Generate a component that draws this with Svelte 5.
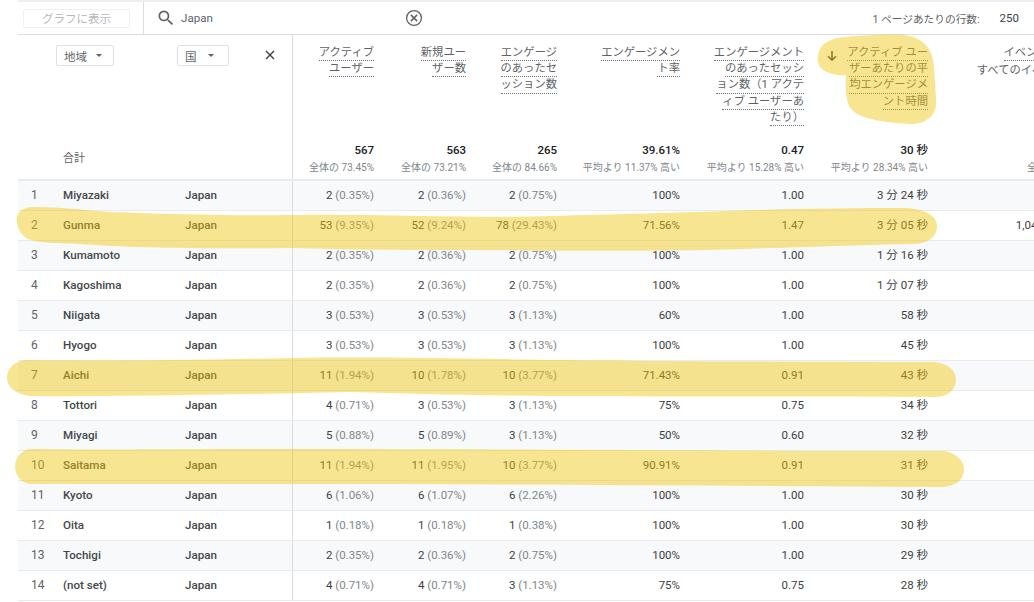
<script lang="ts">
  // [name, active, %, new, %, engaged, %, rate, per user, time]
  const rows = [
    ['Miyazaki', '2', '0.35', '2', '0.36', '2', '0.75', '100%', '1.00', '3 分 24 秒'],
    ['Gunma', '53', '9.35', '52', '9.24', '78', '29.43', '71.56%', '1.47', '3 分 05 秒'],
    ['Kumamoto', '2', '0.35', '2', '0.36', '2', '0.75', '100%', '1.00', '1 分 16 秒'],
    ['Kagoshima', '2', '0.35', '2', '0.36', '2', '0.75', '100%', '1.00', '1 分 07 秒'],
    ['Niigata', '3', '0.53', '3', '0.53', '3', '1.13', '60%', '1.00', '58 秒'],
    ['Hyogo', '3', '0.53', '3', '0.53', '3', '1.13', '100%', '1.00', '45 秒'],
    ['Aichi', '11', '1.94', '10', '1.78', '10', '3.77', '71.43%', '0.91', '43 秒'],
    ['Tottori', '4', '0.71', '3', '0.53', '3', '1.13', '75%', '0.75', '34 秒'],
    ['Miyagi', '5', '0.88', '5', '0.89', '3', '1.13', '50%', '0.60', '32 秒'],
    ['Saitama', '11', '1.94', '11', '1.95', '10', '3.77', '90.91%', '0.91', '31 秒'],
    ['Kyoto', '6', '1.06', '6', '1.07', '6', '2.26', '100%', '1.00', '30 秒'],
    ['Oita', '1', '0.18', '1', '0.18', '1', '0.38', '100%', '1.00', '30 秒'],
    ['Tochigi', '2', '0.35', '2', '0.36', '2', '0.75', '100%', '1.00', '29 秒'],
    ['(not set)', '4', '0.71', '4', '0.71', '3', '1.13', '75%', '0.75', '28 秒'],
  ]

  const metrics = [
    { lines: ['アクティブ', 'ユーザー'], total: '567', sub: '全体の 73.45%' },
    { lines: ['新規ユー', 'ザー数'], total: '563', sub: '全体の 73.21%' },
    { lines: ['エンゲージ', 'のあったセ', 'ッション数'], total: '265', sub: '全体の 84.66%' },
    { lines: ['エンゲージメン', 'ト率'], total: '39.61%', sub: '平均より 11.37% 高い' },
    {
      lines: ['エンゲージメント', 'のあったセッシ', 'ョン数（1 アクテ', 'ィブ ユーザーあ', 'たり）'],
      total: '0.47',
      sub: '平均より 15.28% 高い',
    },
    {
      lines: ['アクティブ ユー', 'ザーあたりの平', '均エンゲージメ', 'ント時間'],
      total: '30 秒',
      sub: '平均より 28.34% 高い',
      sorted: true,
    },
  ]
</script>

<div class="page">
  <div class="toolbar">
    <div class="chart-cell"><button class="chart-btn">グラフに表示</button></div>
    <div class="search">
      <svg class="search-icon" viewBox="0 0 24 24" width="20" height="20">
        <path d="M15.5 14h-.79l-.28-.27A6.47 6.47 0 0 0 16 9.5 6.5 6.5 0 1 0 9.5 16c1.61 0 3.09-.59 4.23-1.57l.27.28v.79l5 4.99L20.49 19l-4.99-5zm-6 0C7.01 14 5 11.99 5 9.5S7.01 5 9.5 5 14 7.01 14 9.5 11.99 14 9.5 14z" fill="#5f6368"/>
      </svg>
      <span class="query">Japan</span>
      <svg class="clear-icon" viewBox="0 0 18 18" width="18" height="18">
        <circle cx="9" cy="9" r="7.4" fill="none" stroke="#5f6368" stroke-width="1.3"/>
        <path d="M5.9 5.9l6.2 6.2M12.1 5.9l-6.2 6.2" stroke="#5f6368" stroke-width="1.5" fill="none"/>
      </svg>
    </div>
    <div class="pager">
      <span class="pager-label">1 ページあたりの行数:</span>
      <span class="pager-value">250</span>
    </div>
  </div>

  <div class="grid head">
    <div class="dim first">
      <span class="total-label">合計</span>
    </div>
    <div class="dim">
      <button class="picker picker-region">地域<i class="caret"></i></button>
    </div>
    <div class="dim dim-country">
      <button class="picker picker-country">国<i class="caret"></i></button>
      <svg class="close" viewBox="0 0 10 10" width="10" height="10">
        <path d="M1 1l8 8M9 1l-8 8" stroke="#3c4043" stroke-width="1.4" fill="none"/>
      </svg>
    </div>
    {#each metrics as m, i}
      <div class="metric" class:divider={i === 0}>
        <div class="label-row">
          {#if m.sorted}
            <svg class="sort" viewBox="0 0 12 12" width="12" height="12">
              <path d="M6 1v9M2 6.2L6 10.2l4-4" stroke="#3c4043" stroke-width="1.6" fill="none"/>
            </svg>
          {/if}
          <div class="label">
            {#each m.lines as line}
              <span class="label-line"><span>{line}</span></span>
            {/each}
          </div>
        </div>
        <div class="total">{m.total}</div>
        <div class="sub">{m.sub}</div>
      </div>
    {/each}
    <div class="metric events">
      <div class="label events-label">
        <span class="label-line events-title"><span>イベント数</span></span>
        <span class="label-line plain">すべてのイベント</span>
      </div>
      <div class="total">&nbsp;</div>
      <div class="sub">全体の 81.20%</div>
    </div>
  </div>

  {#each rows as r, i}
    <div class="grid row" class:odd={i % 2 === 0}>
      <div class="idx">{i + 1}</div>
      <div class="name">{r[0]}</div>
      <div class="name">Japan</div>
      <div class="num divider">{r[1]} <span class="pct">({r[2]}%)</span></div>
      <div class="num">{r[3]} <span class="pct">({r[4]}%)</span></div>
      <div class="num">{r[5]} <span class="pct">({r[6]}%)</span></div>
      <div class="num">{r[7]}</div>
      <div class="num">{r[8]}</div>
      <div class="num">{r[9]}</div>
      <div class="num last">{#if i === 1}1,048 <span class="pct">(11.34%)</span>{/if}</div>
    </div>
  {/each}

  <!-- marker strokes drawn by hand over the table -->
  <svg class="marker" viewBox="0 0 1034 602" width="1034" height="602">
    <path d="M819 52 C822 42 832 38 846 37 C870 35 890 34 904 35 C922 37 933 48 934 66 L936 98 C938 114 928 124 910 124 C890 123 862 120 852 110 C846 104 845 90 846 75 C838 76 826 74 820 67 C817 62 817 57 819 52 Z"/>
    <path d="M33 207 C60 207 85 210 110 212 C170 214 240 216 292 215 C360 214 430 217 500 217 C560 216 620 214 700 212 C770 209 840 208 905 208 C926 209 937 216 937 226 C937 237 928 244 912 244 C860 245 780 248 704 250 C640 251 560 251 500 250 C430 250 360 250 292 248 C210 249 130 248 80 244 C55 243 35 243 26 238 C15 230 14 214 22 210 C25 208 29 207 33 207 Z"/>
    <path d="M28 360 C100 361 200 360 292 358 C360 357 430 358 500 359 C620 361 780 362 935 362 C950 364 956 372 956 379 C956 390 948 397 934 397 C820 396 700 397 600 396 C500 396 420 394 350 392 C250 394 110 397 30 396 C14 394 7 386 7 378 C7 368 15 360 28 360 Z"/>
    <path d="M32 449 C100 450 200 449 292 449 C500 449 720 451 945 451 C958 454 964 462 964 469 C964 480 955 487 940 487 C720 486 500 484 292 484 C200 484 100 484 32 484 C22 484 15 476 15 467 C15 457 22 449 32 449 Z"/>
  </svg>
</div>

<style>
  :global(body) {
    margin: 0;
    background: #fff;
  }
  .page {
    position: relative;
    width: 1034px;
    height: 602px;
    overflow: hidden;
    padding-left: 18px;
    box-sizing: border-box;
    font-family: Roboto, "Noto Sans CJK JP", sans-serif;
    font-size: 12px;
    color: #3c4043;
  }
  .toolbar {
    display: flex;
    align-items: stretch;
    height: 35px;
    box-sizing: border-box;
    border-top: 2px solid #eceef0;
    border-bottom: 1px solid #dadce0;
  }
  .chart-cell {
    width: 125.5px;
    flex: none;
    display: flex;
    align-items: center;
    padding-left: 5px;
    box-sizing: border-box;
    border-right: 1px solid #dadce0;
  }
  .chart-btn {
    width: 107px;
    height: 19px;
    padding: 0;
    background: #fff;
    border: 1px solid #eef0f1;
    border-radius: 2px;
    font: inherit;
    font-size: 11.5px;
    color: #b4b8bc;
  }
  .search {
    width: 279.5px;
    flex: none;
    display: flex;
    align-items: center;
    padding-left: 12.5px;
    box-sizing: border-box;
  }
  .search-icon {
    flex: none;
  }
  .query {
    margin-left: 5px;
    font-size: 11.6px;
    color: #5f6368;
  }
  .clear-icon {
    margin-left: auto;
    flex: none;
  }
  .pager {
    flex: 1;
    display: flex;
    align-items: center;
    justify-content: flex-end;
    padding-right: 15px;
    font-size: 10.7px;
    color: #5f6368;
  }
  .pager-value {
    margin-left: 20px;
    font-size: 11.5px;
    color: #3c4043;
  }
  .grid {
    display: grid;
    grid-template-columns: 45px 122px 107px 90px 92px 91px 123px 124px 124px 160px;
  }
  .head {
    height: 146px;
    box-sizing: border-box;
    border-bottom: 2px solid #e8eaed;
  }
  .dim {
    position: relative;
    min-width: 0;
  }
  .total-label {
    position: absolute;
    left: 45px;
    top: 114px;
    white-space: nowrap;
    color: #5f6368;
    font-size: 11px;
  }
  .picker {
    display: inline-flex;
    align-items: center;
    gap: 9px;
    height: 19px;
    padding: 0 0 0 7px;
    background: #fff;
    border: 1px solid #dfe1e5;
    border-radius: 2px;
    font: inherit;
    font-size: 11.5px;
    color: #5f6368;
    box-sizing: content-box;
  }
  .picker-region {
    width: 49px;
    margin: 10px 0 0 -7px;
  }
  .picker-country {
    width: 43px;
    margin: 10px 0 0 -8px;
    gap: 11px;
  }
  .caret {
    width: 0;
    height: 0;
    border-left: 3.5px solid transparent;
    border-right: 3.5px solid transparent;
    border-top: 3.5px solid #5f6368;
  }
  .dim-country {
    display: flex;
    align-items: flex-start;
  }
  .close {
    margin: 15px 0 0 36px;
    flex: none;
  }
  .metric {
    display: flex;
    flex-direction: column;
    align-items: stretch;
    padding: 10px 8px 4px 0;
    box-sizing: border-box;
    text-align: right;
    min-width: 0;
  }
  .divider {
    border-left: 1px solid #dadce0;
  }
  .label-row {
    flex: 1;
    display: flex;
    justify-content: space-between;
    align-items: flex-start;
    padding-left: 14px;
  }
  .sort {
    margin-top: 5px;
    flex: none;
  }
  .label {
    margin-left: auto;
    color: #5f6368;
    font-size: 11.3px;
  }
  .label-line {
    display: block;
    height: 16.2px;
    white-space: nowrap;
  }
  .label-line span {
    display: inline-block;
    height: 15.2px;
    line-height: 15.2px;
    border-bottom: 1px dotted #70757a;
    vertical-align: top;
  }
  .plain {
    color: #5f6368;
  }
  .total {
    font-size: 11.5px;
    font-weight: 500;
    color: #202124;
    line-height: 16px;
  }
  .sub {
    margin-top: 3px;
    font-size: 10px;
    line-height: 14px;
    color: #80868b;
    white-space: nowrap;
  }
  .events {
    padding-right: 4px;
  }
  .events-label {
    flex: 1;
    margin: 0;
    padding-right: 26px;
    text-align: right;
  }
  .events-title {
    margin-right: 6px;
  }
  .row {
    height: 30px;
    box-sizing: border-box;
    border-bottom: 1px solid #e8eaed;
    line-height: 28px;
  }
  .odd {
    background: #f8f9fa;
  }
  .idx {
    padding-left: 13px;
    color: #5f6368;
  }
  .name {
    font-size: 11.6px;
    font-weight: 500;
    color: #44474a;
    white-space: nowrap;
  }
  .num {
    padding-right: 8px;
    text-align: right;
    font-size: 11.5px;
    color: #3c4043;
    white-space: nowrap;
  }
  .last {
    padding-right: 4px;
  }
  .pct {
    color: #80868b;
  }
  .marker {
    position: absolute;
    left: 0;
    top: 0;
    pointer-events: none;
  }
  .marker path {
    fill: #f0c60d;
    opacity: 0.45;
  }
</style>
